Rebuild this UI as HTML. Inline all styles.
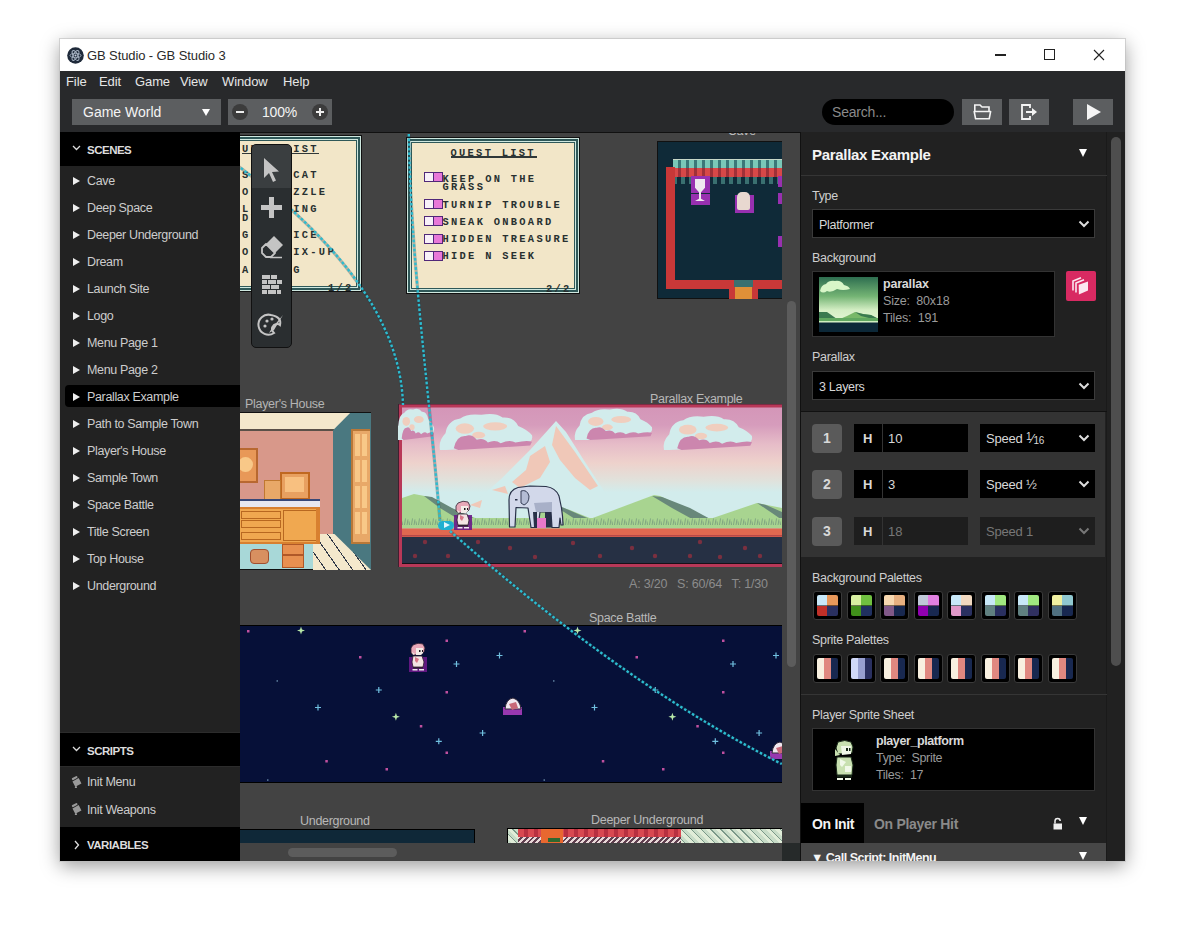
<!DOCTYPE html>
<html><head><meta charset="utf-8">
<style>
*{margin:0;padding:0;box-sizing:border-box}
html,body{width:1200px;height:941px;overflow:hidden;background:#fff;font-family:"Liberation Sans",sans-serif}
.a{position:absolute}
#win{position:absolute;left:60px;top:39px;width:1065px;height:822px;background:#28292b;box-shadow:0 0 0 1px rgba(190,190,190,0.6),0 5px 18px rgba(0,0,0,0.4);overflow:hidden}
#title{left:0;top:0;width:1065px;height:32px;background:#fff}
#menubar{left:0;top:32px;width:1065px;height:61px;background:#28292b}
.menu{position:absolute;margin-top:1px;color:#e6e6e6;font-size:13px;letter-spacing:-0.1px}
#side{left:0;top:93px;width:180px;height:729px;background:#222}
.hdr{position:absolute;left:0;width:180px;height:34px;background:#000;color:#ddd;font-weight:bold;font-size:11.5px}
.hdr span{position:absolute;left:27px;top:11.5px;letter-spacing:-0.5px}
.item{position:absolute;left:27px;margin-top:1px;color:#cdcdcd;font-size:12.5px;letter-spacing:-0.35px;white-space:nowrap}
.tri{position:absolute;left:13px;width:0;height:0;border-left:7px solid #eee;border-top:4px solid transparent;border-bottom:4px solid transparent}
#canvas{left:180px;top:93px;width:560px;height:729px;background:#434343;overflow:hidden}
#right{left:740px;top:93px;width:325px;height:729px;background:#212121;overflow:hidden}
.lbl{position:absolute;left:12px;color:#cfcfcf;font-size:12.5px;letter-spacing:-0.3px;white-space:nowrap}
.sel{position:absolute;left:12px;width:283px;height:29px;background:#000;border:1px solid #3a3a3a;color:#d8d8d8;font-size:12.5px;letter-spacing:-0.3px}
.slbl{position:absolute;color:#aaa;font-size:12.5px;letter-spacing:-0.3px;white-space:nowrap}
</style></head><body>
<div id="win">
  <div id="title" class="a">
    <svg class="a" style="left:7px;top:7.5px" width="17" height="17" viewBox="0 0 17 17"><circle cx="8.5" cy="8.5" r="8.3" fill="#1f2a3a"/><g fill="none" stroke="#a8b4c4" stroke-width="0.9"><ellipse cx="8.5" cy="8.5" rx="5.5" ry="2.2" transform="rotate(60 8.5 8.5)"/><ellipse cx="8.5" cy="8.5" rx="5.5" ry="2.2" transform="rotate(-60 8.5 8.5)"/><ellipse cx="8.5" cy="8.5" rx="5.5" ry="2.2"/></g><circle cx="8.5" cy="8.5" r="1" fill="#c8d0e0"/></svg>
    <div class="a" style="left:27px;top:9px;font-size:13px;color:#2a2a2a;letter-spacing:-0.1px">GB Studio - GB Studio 3</div>
    <div class="a" style="left:935px;top:15px;width:11px;height:1.5px;background:#222"></div>
    <div class="a" style="left:984px;top:10px;width:11px;height:11px;border:1px solid #222"></div>
    <svg class="a" style="left:1033px;top:10px" width="12" height="12" viewBox="0 0 12 12"><path d="M1 1 L11 11 M11 1 L1 11" stroke="#222" stroke-width="1.1"/></svg>
  </div>
  <div id="menubar" class="a">
    <span class="menu" style="left:6px;top:2px">File</span>
    <span class="menu" style="left:39px;top:2px">Edit</span>
    <span class="menu" style="left:75px;top:2px">Game</span>
    <span class="menu" style="left:120px;top:2px">View</span>
    <span class="menu" style="left:162px;top:2px">Window</span>
    <span class="menu" style="left:223px;top:2px">Help</span>
<div id="tb" style="position:absolute;left:0;top:-32px"><div class="a" style="left:11.5px;top:60px;width:149.5px;height:26px;background:#5c5e60"></div>
<div class="a" style="left:23px;top:64px;font-size:14px;color:#f4f4f4;line-height:18px;white-space:nowrap">Game World</div>
<div class="a" style="left:142px;top:70px;width:0;height:0;border-top:7px solid #fff;border-left:4px solid transparent;border-right:4px solid transparent"></div>
<div class="a" style="left:168px;top:60px;width:104px;height:26px;background:#5c5e60"></div>
<div class="a" style="left:172px;top:65px;width:16px;height:16px;border-radius:50%;background:#3c3c3c"></div><div class="a" style="left:176px;top:72px;width:8px;height:2px;background:#eee"></div>
<div class="a" style="left:251.5px;top:65px;width:16px;height:16px;border-radius:50%;background:#3c3c3c"></div><div class="a" style="left:255.5px;top:72px;width:8px;height:2px;background:#eee"></div><div class="a" style="left:258.5px;top:69px;width:2px;height:8px;background:#eee"></div>
<div class="a" style="left:202px;top:64px;font-size:14px;color:#f4f4f4;line-height:18px;letter-spacing:-0.2px">100%</div>
<div class="a" style="left:762px;top:60px;width:132px;height:26px;background:#000;border-radius:13px"></div>
<div class="a" style="left:772px;top:64px;font-size:14px;color:#8a8a8a;line-height:18px;letter-spacing:-0.2px">Search...</div>
<div class="a" style="left:902px;top:60px;width:40px;height:26px;background:#5c5e60"></div>
<div class="a" style="left:949px;top:60px;width:40px;height:26px;background:#5c5e60"></div>
<div class="a" style="left:1013px;top:60px;width:40px;height:26px;background:#5c5e60"></div>
<svg class="a" style="left:913px;top:64px" width="19" height="18" viewBox="0 0 19 18"><path d="M1.8 8 V2 H7 L9 4 H16 V8" fill="none" stroke="#f4f4f4" stroke-width="1.6"/><path d="M1.2 8.5 H17.6 L16.2 15.8 H2.6 Z" fill="none" stroke="#f4f4f4" stroke-width="1.6" stroke-linejoin="round"/></svg>
<svg class="a" style="left:960px;top:64px" width="19" height="18" viewBox="0 0 19 18"><path d="M10 5 V2 H2 V16 H10 V13" fill="none" stroke="#f4f4f4" stroke-width="1.8"/><path d="M6 9 H13" stroke="#f4f4f4" stroke-width="2"/><path d="M12 5 L17 9 L12 13Z" fill="#f4f4f4"/></svg>
<div class="a" style="left:1027px;top:65px;width:0;height:0;border-left:14px solid #f4f4f4;border-top:8px solid transparent;border-bottom:8px solid transparent"></div></div><!--tbend-->
  </div>
  <div id="side" class="a">
<div class="hdr" style="top:0"><svg class="a" style="left:12px;top:13px" width="9" height="6" viewBox="0 0 9 6"><path d="M1 1 L4.5 4.5 L8 1" stroke="#ddd" stroke-width="1.3" fill="none"/></svg><span>SCENES</span></div>
<div class="a" style="left:5px;top:253px;width:175px;height:22px;background:#000;border-radius:4px 0 0 4px"></div>
<div class="tri" style="top:45px"></div><div class="item" style="top:41px">Cave</div>
<div class="tri" style="top:72px"></div><div class="item" style="top:68px">Deep Space</div>
<div class="tri" style="top:99px"></div><div class="item" style="top:95px">Deeper Underground</div>
<div class="tri" style="top:126px"></div><div class="item" style="top:122px">Dream</div>
<div class="tri" style="top:153px"></div><div class="item" style="top:149px">Launch Site</div>
<div class="tri" style="top:180px"></div><div class="item" style="top:176px">Logo</div>
<div class="tri" style="top:207px"></div><div class="item" style="top:203px">Menu Page 1</div>
<div class="tri" style="top:234px"></div><div class="item" style="top:230px">Menu Page 2</div>
<div class="tri" style="top:261px"></div><div class="item" style="top:257px">Parallax Example</div>
<div class="tri" style="top:288px"></div><div class="item" style="top:284px">Path to Sample Town</div>
<div class="tri" style="top:315px"></div><div class="item" style="top:311px">Player&#39;s House</div>
<div class="tri" style="top:342px"></div><div class="item" style="top:338px">Sample Town</div>
<div class="tri" style="top:369px"></div><div class="item" style="top:365px">Space Battle</div>
<div class="tri" style="top:396px"></div><div class="item" style="top:392px">Title Screen</div>
<div class="tri" style="top:423px"></div><div class="item" style="top:419px">Top House</div>
<div class="tri" style="top:450px"></div><div class="item" style="top:446px">Underground</div>
<div class="a" style="left:0;top:600px;width:180px;height:1px;background:#2c2c2c"></div>
<div class="hdr" style="top:601px;height:33px"><svg class="a" style="left:12px;top:13px" width="9" height="6" viewBox="0 0 9 6"><path d="M1 1 L4.5 4.5 L8 1" stroke="#ddd" stroke-width="1.3" fill="none"/></svg><span>SCRIPTS</span></div>
<div class="a" style="left:0;top:634px;width:180px;height:1px;background:#2c2c2c"></div>
<svg class="a" style="left:11px;top:643px" width="11" height="13" viewBox="0 0 11 13"><g transform="rotate(-28 5.5 6.5)"><rect x="2.5" y="1.5" width="6" height="2.2" rx="1" fill="#9a9a9a"/><rect x="2" y="4.5" width="7" height="6" fill="#9a9a9a"/><circle cx="2.3" cy="11.3" r="1.1" fill="#9a9a9a"/></g></svg>
<div class="item" style="top:642px">Init Menu</div>
<svg class="a" style="left:11px;top:670px" width="11" height="13" viewBox="0 0 11 13"><g transform="rotate(-28 5.5 6.5)"><rect x="2.5" y="1.5" width="6" height="2.2" rx="1" fill="#9a9a9a"/><rect x="2" y="4.5" width="7" height="6" fill="#9a9a9a"/><circle cx="2.3" cy="11.3" r="1.1" fill="#9a9a9a"/></g></svg>
<div class="item" style="top:669.5px">Init Weapons</div>
<div class="hdr" style="top:695px"><svg class="a" style="left:14px;top:13px" width="6" height="10" viewBox="0 0 6 10"><path d="M1 1 L4.5 5 L1 9" stroke="#ddd" stroke-width="1.3" fill="none"/></svg><span>VARIABLES</span></div>

  </div>
  <div id="canvas" class="a">
<div class="a" style="left:-52px;top:3px;width:174px;height:157px;background:#f2e6c8;border:1px solid #111;box-shadow:inset 0 0 0 1px #cfe8e0,inset 0 0 0 3px #2f5858,inset 0 0 0 4px #cfe8e0,inset 0 0 0 5px #2f5858"></div>
<div class="a" style="left:-6.5px;top:11.5px;font-family:'Liberation Mono',monospace;font-weight:bold;font-size:10.4px;letter-spacing:2.3px;color:#283030;white-space:pre;line-height:10px"> UEST LIST</div>
<div class="a" style="left:2px;top:20.5px;width:77px;height:1.5px;background:#303838"></div>
<div class="a" style="left:-6.5px;top:38px;font-family:'Liberation Mono',monospace;font-weight:bold;font-size:10.4px;letter-spacing:2.3px;color:#283030;white-space:pre;line-height:10px"> S     CAT</div>
<div class="a" style="left:-6.5px;top:55px;font-family:'Liberation Mono',monospace;font-weight:bold;font-size:10.4px;letter-spacing:2.3px;color:#283030;white-space:pre;line-height:10px"> O     ZZLE</div>
<div class="a" style="left:-6.5px;top:72px;font-family:'Liberation Mono',monospace;font-weight:bold;font-size:10.4px;letter-spacing:2.3px;color:#283030;white-space:pre;line-height:10px"> L     ING</div>
<div class="a" style="left:-6.5px;top:81px;font-family:'Liberation Mono',monospace;font-weight:bold;font-size:10.4px;letter-spacing:2.3px;color:#283030;white-space:pre;line-height:10px"> DI</div>
<div class="a" style="left:-6.5px;top:98px;font-family:'Liberation Mono',monospace;font-weight:bold;font-size:10.4px;letter-spacing:2.3px;color:#283030;white-space:pre;line-height:10px"> G     ICE</div>
<div class="a" style="left:-6.5px;top:115px;font-family:'Liberation Mono',monospace;font-weight:bold;font-size:10.4px;letter-spacing:2.3px;color:#283030;white-space:pre;line-height:10px"> O     IX-UP</div>
<div class="a" style="left:-6.5px;top:133px;font-family:'Liberation Mono',monospace;font-weight:bold;font-size:10.4px;letter-spacing:2.3px;color:#283030;white-space:pre;line-height:10px"> A     G</div>
<div class="a" style="left:88px;top:151px;font-family:'Liberation Mono',monospace;font-weight:bold;font-size:10.4px;letter-spacing:2.3px;color:#283030;white-space:pre;line-height:10px">1/2</div>
<div class="a" style="left:166px;top:5px;width:174px;height:157px;background:#f2e6c8;border:1px solid #111;box-shadow:inset 0 0 0 1px #cfe8e0,inset 0 0 0 3px #2f5858,inset 0 0 0 4px #cfe8e0,inset 0 0 0 5px #2f5858"></div>
<div class="a" style="left:210.5px;top:15.5px;font-family:'Liberation Mono',monospace;font-weight:bold;font-size:10.4px;letter-spacing:2.3px;color:#283030;white-space:pre;line-height:10px">QUEST LIST</div>
<div class="a" style="left:211px;top:24px;width:86px;height:1.5px;background:#303838"></div>
<div class="a" style="left:202.5px;top:41.5px;font-family:'Liberation Mono',monospace;font-weight:bold;font-size:10.4px;letter-spacing:2.3px;color:#283030;white-space:pre;line-height:10px">KEEP ON THE</div>
<div class="a" style="left:202.5px;top:50px;font-family:'Liberation Mono',monospace;font-weight:bold;font-size:10.4px;letter-spacing:2.3px;color:#283030;white-space:pre;line-height:10px">GRASS</div>
<div class="a" style="left:202.5px;top:67.5px;font-family:'Liberation Mono',monospace;font-weight:bold;font-size:10.4px;letter-spacing:2.3px;color:#283030;white-space:pre;line-height:10px">TURNIP TROUBLE</div>
<div class="a" style="left:202.5px;top:84.5px;font-family:'Liberation Mono',monospace;font-weight:bold;font-size:10.4px;letter-spacing:2.3px;color:#283030;white-space:pre;line-height:10px">SNEAK ONBOARD</div>
<div class="a" style="left:202.5px;top:102px;font-family:'Liberation Mono',monospace;font-weight:bold;font-size:10.4px;letter-spacing:2.3px;color:#283030;white-space:pre;line-height:10px">HIDDEN TREASURE</div>
<div class="a" style="left:202.5px;top:119px;font-family:'Liberation Mono',monospace;font-weight:bold;font-size:10.4px;letter-spacing:2.3px;color:#283030;white-space:pre;line-height:10px">HIDE N SEEK</div>
<div class="a" style="left:183.5px;top:40px;width:19px;height:10px;background:#e878d8;border:1.5px solid #502878"></div><div class="a" style="left:183.5px;top:40px;width:10px;height:10px;background:#f8f0f8;border:1.5px solid #502878"></div>
<div class="a" style="left:183.5px;top:67px;width:19px;height:10px;background:#e878d8;border:1.5px solid #502878"></div><div class="a" style="left:183.5px;top:67px;width:10px;height:10px;background:#f8f0f8;border:1.5px solid #502878"></div>
<div class="a" style="left:183.5px;top:84px;width:19px;height:10px;background:#e878d8;border:1.5px solid #502878"></div><div class="a" style="left:183.5px;top:84px;width:10px;height:10px;background:#f8f0f8;border:1.5px solid #502878"></div>
<div class="a" style="left:183.5px;top:101.5px;width:19px;height:10px;background:#e878d8;border:1.5px solid #502878"></div><div class="a" style="left:183.5px;top:101.5px;width:10px;height:10px;background:#f8f0f8;border:1.5px solid #502878"></div>
<div class="a" style="left:183.5px;top:118.5px;width:19px;height:10px;background:#e878d8;border:1.5px solid #502878"></div><div class="a" style="left:183.5px;top:118.5px;width:10px;height:10px;background:#f8f0f8;border:1.5px solid #502878"></div>
<div class="a" style="left:306px;top:152px;font-family:'Liberation Mono',monospace;font-weight:bold;font-size:10.4px;letter-spacing:2.3px;color:#283030;white-space:pre;line-height:10px">2/2</div>
<div class="a" style="left:417px;top:9px;width:130px;height:158px;background:#0f2a38;border:1px solid #111"></div>
<div class="a" style="left:433px;top:27px;width:115px;height:10px;background:repeating-linear-gradient(90deg,#7ac8b8 0 5px,#3a7878 5px 8px);border-top:1px solid #c8d8c8"></div>
<div class="a" style="left:433px;top:36px;width:115px;height:9px;background:repeating-linear-gradient(90deg,#d84848 0 5px,#a03038 5px 8px)"></div>
<div class="a" style="left:433px;top:45px;width:115px;height:7px;background:repeating-linear-gradient(90deg,#3a7070 0 4px,#0f2a38 4px 8px)"></div>
<div class="a" style="left:426px;top:35px;width:9px;height:122px;background:#c83838"></div>
<div class="a" style="left:426px;top:148px;width:69px;height:9px;background:#c83838"></div>
<div class="a" style="left:512px;top:148px;width:36px;height:9px;background:#c83838"></div>
<div class="a" style="left:489px;top:148px;width:6px;height:19px;background:#c83838"></div><div class="a" style="left:512px;top:148px;width:6px;height:19px;background:#c83838"></div>
<div class="a" style="left:495px;top:155px;width:17px;height:12px;background:#e09038"></div>
<div class="a" style="left:494px;top:148px;width:19px;height:7px;background:#3a7070"></div>
<div class="a" style="left:451px;top:44px;width:19px;height:17px;background:#9830b0"></div><div class="a" style="left:451px;top:62px;width:19px;height:11px;background:#9830b0"></div>
<div class="a" style="left:455px;top:47px;width:10px;height:22px;background:#f0e8f0;clip-path:polygon(0 0,100% 0,100% 40%,60% 60%,60% 90%,100% 100%,0 100%,40% 90%,40% 60%,0 40%)"></div>
<div class="a" style="left:494.5px;top:63px;width:19px;height:18px;background:#9830b0"></div><div class="a" style="left:497px;top:60px;width:13px;height:18px;background:#e8d8d0;border-radius:5px 5px 2px 2px"></div>
<div class="a" style="left:538px;top:44px;width:4px;height:11px;background:#9830b0"></div><div class="a" style="left:538px;top:61px;width:4px;height:11px;background:#9830b0"></div><div class="a" style="left:538px;top:103.5px;width:4px;height:11px;background:#9830b0"></div>
<div class="a" style="left:488px;top:-8px;font-size:12px;color:#bbb">Cave</div>
<div class="a" style="left:-20px;top:280px;width:151px;height:158px;background:#111;overflow:hidden"><div class="a" style="left:0;top:1px;width:150px;height:156px;background:#a8d8d8"></div><div class="a" style="left:0;top:1px;width:150px;height:17px;background:#f4e8cc"></div><div class="a" style="left:0;top:17px;width:114px;height:2px;background:#5a5048"></div><div class="a" style="left:0;top:19px;width:114px;height:104px;background:#d8988a"></div><div class="a" style="left:113px;top:1px;width:38px;height:157px;background:#4a7880;clip-path:polygon(0 11%,45% 0,100% 0,100% 100%,45% 100%,0 77%)"></div><div class="a" style="left:131px;top:17px;width:19px;height:115px;background:#e8a868;border:2px solid #b87838;border-right:none"></div><div class="a" style="left:135px;top:22px;width:5px;height:22px;background:#f8c888"></div><div class="a" style="left:142px;top:22px;width:5px;height:22px;background:#f8c888"></div><div class="a" style="left:135px;top:48px;width:5px;height:22px;background:#f8c888"></div><div class="a" style="left:142px;top:48px;width:5px;height:22px;background:#f8c888"></div><div class="a" style="left:135px;top:74px;width:5px;height:22px;background:#f8c888"></div><div class="a" style="left:142px;top:74px;width:5px;height:22px;background:#f8c888"></div><div class="a" style="left:135px;top:100px;width:5px;height:22px;background:#f8c888"></div><div class="a" style="left:142px;top:100px;width:5px;height:22px;background:#f8c888"></div><div class="a" style="left:93px;top:122px;width:58px;height:36px;background:repeating-linear-gradient(55deg,#f4e8cc 0 10px,#303848 10px 11px);clip-path:polygon(0 0,37% 0,100% 100%,0 100%)"></div><div class="a" style="left:14px;top:36px;width:24px;height:35px;background:#e89858;border:2px solid #b86830"></div><div class="a" style="left:18px;top:45px;width:15px;height:15px;border-radius:50%;background:#f8c888"></div><div class="a" style="left:60px;top:60px;width:30px;height:28px;background:#e8a060;border:2px solid #c06820"></div><div class="a" style="left:65px;top:65px;width:19px;height:15px;background:#f8c080"></div><div class="a" style="left:44px;top:68px;width:17px;height:20px;background:#e8a868;border:1px solid #c07830"></div><div class="a" style="left:0;top:87px;width:100px;height:8px;background:#e8e8f0;border-top:2px solid #384878"></div><div class="a" style="left:0;top:95px;width:100px;height:37px;background:#f0a850;border:2px solid #d88030;border-left:none"></div><div class="a" style="left:21px;top:99px;width:40px;height:8px;border:1.5px solid #b86820"></div><div class="a" style="left:21px;top:108px;width:40px;height:8px;border:1.5px solid #b86820"></div><div class="a" style="left:21px;top:120px;width:40px;height:8px;border:1.5px solid #b86820"></div><div class="a" style="left:63px;top:98px;width:34px;height:31px;border:1.5px solid #b86820"></div><div class="a" style="left:96px;top:97px;width:4px;height:35px;background:#d88030"></div><div class="a" style="left:30px;top:137px;width:19px;height:15px;background:#d89060;border:1.5px solid #a05030;border-radius:4px"></div><div class="a" style="left:62px;top:132px;width:22px;height:24px;background:#e89050;border:1.5px solid #b05828"></div><div class="a" style="left:62px;top:142px;width:22px;height:2px;background:#b05828"></div></div>
<div class="a" style="left:5px;top:264.5px;font-size:12.5px;letter-spacing:-0.3px;color:#b4b4b4;white-space:nowrap">Player&#39;s House</div>
<svg class="a" style="left:158px;top:272px" width="384" height="163" viewBox="398 404 384 163"><defs><linearGradient id="sk" x1="0" y1="407" x2="0" y2="519" gradientUnits="userSpaceOnUse"><stop offset="0" stop-color="#d496b8"/><stop offset="0.16" stop-color="#d69cbc"/><stop offset="0.33" stop-color="#e6bcc8"/><stop offset="0.5" stop-color="#eed2cc"/><stop offset="0.66" stop-color="#e0e2dc"/><stop offset="0.76" stop-color="#d2ecec"/><stop offset="1" stop-color="#d2ecec"/></linearGradient><pattern id="gr" width="7" height="10.5" patternUnits="userSpaceOnUse"><rect width="7" height="10.5" fill="#a8d490"/><path d="M1 10.5 L2 5 M3.5 10.5 L3 7 M5.5 10.5 L6.5 4" stroke="#7aa07e" stroke-width="0.9"/></pattern></defs><rect x="398" y="403.5" width="390" height="163.5" fill="#b83858"/><rect x="398" y="403.5" width="390" height="1" fill="#402030"/><rect x="398" y="403.5" width="1" height="163.5" fill="#402030"/><rect x="402" y="407.5" width="380" height="156" fill="url(#sk)"/><path d="M455 519 L500 480 L530 450 L548 430 L556 421 L566 432 L585 462 L606 494 L630 519Z" fill="#d2ecec"/><path d="M556 426 L575 452 L598 486 L590 490 L575 478 L560 460 L552 445Z" fill="#f0c8b8"/><path d="M530 456 L545 446 L550 462 L540 478 L520 488 L512 482 L526 470Z" fill="#f0c8b8"/><path d="M492 490 L505 486 L508 494Z M470 505 L482 500 L480 508Z" fill="#f0c8b8"/><g transform="translate(396 408) scale(38 32)"><path d="M0 1 Q-0.02 0.75 0.06 0.55 Q0.08 0.2 0.22 0.15 Q0.3 0 0.45 0.05 Q0.6 -0.02 0.68 0.12 Q0.8 0.1 0.85 0.35 Q0.95 0.45 1 0.6 Q1.02 0.8 0.9 0.85 L0.4 0.92 Q0.2 1.02 0 1Z" fill="#d2ecec"/><ellipse cx="0.27" cy="0.42" rx="0.1" ry="0.14" fill="#f0cebe"/><ellipse cx="0.6" cy="0.36" rx="0.13" ry="0.11" fill="#f0cebe"/><ellipse cx="0.42" cy="0.6" rx="0.07" ry="0.09" fill="#f0cebe"/><path d="M0.15 0.95 Q0.18 0.6 0.28 0.62 Q0.34 0.55 0.4 0.72 Q0.48 0.66 0.52 0.8 Q0.6 0.7 0.66 0.82 Q0.76 0.7 0.82 0.8 Q0.95 0.72 1 0.78 L0.98 0.88 L0.2 1Z" fill="#cc86ae"/></g><g transform="translate(440 413) scale(92 37)"><path d="M0 1 Q-0.02 0.75 0.06 0.55 Q0.08 0.2 0.22 0.15 Q0.3 0 0.45 0.05 Q0.6 -0.02 0.68 0.12 Q0.8 0.1 0.85 0.35 Q0.95 0.45 1 0.6 Q1.02 0.8 0.9 0.85 L0.4 0.92 Q0.2 1.02 0 1Z" fill="#d2ecec"/><ellipse cx="0.27" cy="0.42" rx="0.1" ry="0.14" fill="#f0cebe"/><ellipse cx="0.6" cy="0.36" rx="0.13" ry="0.11" fill="#f0cebe"/><ellipse cx="0.42" cy="0.6" rx="0.07" ry="0.09" fill="#f0cebe"/><path d="M0.15 0.95 Q0.18 0.6 0.28 0.62 Q0.34 0.55 0.4 0.72 Q0.48 0.66 0.52 0.8 Q0.6 0.7 0.66 0.82 Q0.76 0.7 0.82 0.8 Q0.95 0.72 1 0.78 L0.98 0.88 L0.2 1Z" fill="#cc86ae"/></g><g transform="translate(575 408) scale(77 32)"><path d="M0 1 Q-0.02 0.75 0.06 0.55 Q0.08 0.2 0.22 0.15 Q0.3 0 0.45 0.05 Q0.6 -0.02 0.68 0.12 Q0.8 0.1 0.85 0.35 Q0.95 0.45 1 0.6 Q1.02 0.8 0.9 0.85 L0.4 0.92 Q0.2 1.02 0 1Z" fill="#d2ecec"/><ellipse cx="0.27" cy="0.42" rx="0.1" ry="0.14" fill="#f0cebe"/><ellipse cx="0.6" cy="0.36" rx="0.13" ry="0.11" fill="#f0cebe"/><ellipse cx="0.42" cy="0.6" rx="0.07" ry="0.09" fill="#f0cebe"/><path d="M0.15 0.95 Q0.18 0.6 0.28 0.62 Q0.34 0.55 0.4 0.72 Q0.48 0.66 0.52 0.8 Q0.6 0.7 0.66 0.82 Q0.76 0.7 0.82 0.8 Q0.95 0.72 1 0.78 L0.98 0.88 L0.2 1Z" fill="#cc86ae"/></g><g transform="translate(664 415) scale(88 35)"><path d="M0 1 Q-0.02 0.75 0.06 0.55 Q0.08 0.2 0.22 0.15 Q0.3 0 0.45 0.05 Q0.6 -0.02 0.68 0.12 Q0.8 0.1 0.85 0.35 Q0.95 0.45 1 0.6 Q1.02 0.8 0.9 0.85 L0.4 0.92 Q0.2 1.02 0 1Z" fill="#d2ecec"/><ellipse cx="0.27" cy="0.42" rx="0.1" ry="0.14" fill="#f0cebe"/><ellipse cx="0.6" cy="0.36" rx="0.13" ry="0.11" fill="#f0cebe"/><ellipse cx="0.42" cy="0.6" rx="0.07" ry="0.09" fill="#f0cebe"/><path d="M0.15 0.95 Q0.18 0.6 0.28 0.62 Q0.34 0.55 0.4 0.72 Q0.48 0.66 0.52 0.8 Q0.6 0.7 0.66 0.82 Q0.76 0.7 0.82 0.8 Q0.95 0.72 1 0.78 L0.98 0.88 L0.2 1Z" fill="#cc86ae"/></g><path d="M402 498 L414 494 L430 497 L455 510 L478 519 L402 519Z" fill="#a8d490"/><path d="M424 496 L432 497 L452 508 L478 520 L458 519 L440 508Z" fill="#68887a"/><path d="M530 519 L553 505 L570 510 L592 519Z" fill="#a8d490"/><path d="M553 505 L562 507 L578 514 L592 520 L575 519Z" fill="#68887a"/><path d="M590 519 L654 495 L660 496 L710 519Z" fill="#a8d490"/><path d="M652 496 L662 497 L690 508 L712 520 L692 519 L672 508Z" fill="#68887a"/><path d="M710 519 L757 503 L782 508 L782 519Z" fill="#a8d490"/><path d="M757 503 L766 505 L782 512 L782 520 L772 513Z" fill="#68887a"/><rect x="402" y="518" width="380" height="10.5" fill="url(#gr)"/><rect x="402" y="528.4" width="380" height="8.6" fill="#e06850"/><rect x="402" y="535" width="380" height="1.5" fill="#b84848"/><rect x="402" y="537" width="380" height="26" fill="#263044"/><g fill="#7a3040"><circle cx="425" cy="542" r="2.2"/><circle cx="415" cy="556" r="2.2"/><circle cx="448" cy="556" r="2.2"/><circle cx="478" cy="542" r="2.2"/><circle cx="510" cy="548" r="2.2"/><circle cx="535" cy="557" r="2.2"/><circle cx="573" cy="543" r="2.2"/><circle cx="600" cy="556" r="2.2"/><circle cx="632" cy="548" r="2.2"/><circle cx="655" cy="556" r="2.2"/><circle cx="700" cy="542" r="2.2"/><circle cx="690" cy="556" r="2.2"/><circle cx="745" cy="548" r="2.2"/><circle cx="760" cy="556" r="2.2"/><circle cx="720" cy="557" r="2.2"/></g><rect x="402" y="563" width="380" height="1" fill="#181018"/></svg>
<svg class="a" style="left:266px;top:352px" width="60" height="46" viewBox="506 484 60 46"><path d="M545 510 L553 510 L553 527.5 L545 527.5Z" fill="#283048"/><path d="M509.5 527 L509 500 Q509 490 518 487.5 L530 486 L546 486.5 Q556 488 559 496 L561.5 508 L562.5 516 L563 525 L561 525 L560 518 L559 527.5 L552 527.5 L551 512 L540 512 L538 527.5 L531 527.5 L528 508 L516 507.5 L515 527Z" fill="#d2d8ea" stroke="#283048" stroke-width="1.2" stroke-linejoin="round"/><path d="M521 491 Q527 489 529 496 Q529 503 524 505 L521 503Z" fill="#b4bcd4" stroke="#283048" stroke-width="0.9"/><path d="M534 503 L552 502 L552 512 L536 512Z" fill="#a8b0c8"/><path d="M533 512 L537 512 L537 527 L534 527Z" fill="#283048"/><rect x="515" y="499" width="2.5" height="1.5" fill="#283048"/><rect x="537" y="518" width="9" height="10" fill="#e878c8"/></svg>
<svg class="a" style="left:214px;top:367.5px" width="18.0" height="30.0" viewBox="0 0 18 30"><rect x="0" y="15" width="18" height="15" fill="#6a1888" opacity="0.9"/><path d="M4 3 Q9 0 14 2 L16 6 L15 10 L13 12 L5 13 L2 11 L2 6Z" fill="#e8a8b8" stroke="#302030" stroke-width="0.8"/><path d="M7 6 L14 6 L14 11 L12 13 L7 13Z" fill="#f4ece8"/><rect x="10" y="8" width="1.5" height="2" fill="#201820"/><rect x="13" y="8" width="1" height="2" fill="#201820"/><path d="M3 10 L6 12 L4 13Z" fill="#f4ece8"/><path d="M4 14 L13 14 L15 20 L14 25 L4 25 L3 20Z" fill="#f4e4e4" stroke="#302030" stroke-width="0.8"/><path d="M6 15 L10 17 L8 21 L6 19Z" fill="#d87888"/><rect x="4" y="25" width="10" height="1.5" fill="#302030"/><rect x="3.5" y="27" width="5" height="1.5" fill="#f0e8f0"/><rect x="10" y="27" width="5" height="1.5" fill="#f0e8f0"/></svg>
<div class="a" style="left:198px;top:388.5px;width:16px;height:9.5px;background:#20b0d0;border-radius:5px"></div><div class="a" style="left:204px;top:390px;width:0;height:0;border-left:6px solid #e0f8ff;border-top:3px solid transparent;border-bottom:3px solid transparent"></div>
<div class="a" style="left:410px;top:259.5px;font-size:12.5px;letter-spacing:-0.3px;color:#b8b8b8;white-space:nowrap">Parallax Example</div>
<div class="a" style="left:389px;top:445px;font-size:12.5px;letter-spacing:-0.2px;color:#8c8c8c;white-space:pre">A: 3/20   S: 60/64   T: 1/30</div>
<div class="a" style="left:-5px;top:493px;width:548px;height:158px;background:#061038;border:1px solid #000"></div>
<svg class="a" style="left:0;top:493px" width="542" height="158" viewBox="0 493 542 158"><rect x="7" y="498" width="2.5" height="2.5" fill="#c050a0"/><path d="M61 494.5L62 497.5L65 498.5L62 499.5L61 502.5L60 499.5L57 498.5L60 497.5Z" fill="#b8e8a8"/><rect x="119" y="524" width="2.5" height="2.5" fill="#c050a0"/><rect x="205.5" y="507.5" width="2.5" height="2.5" fill="#c050a0"/><path d="M213.5 532H219.5M216.5 529V535" stroke="#70c0e0" stroke-width="1.2"/><path d="M256.5 523.5H262.5M259.5 520.5V526.5" stroke="#70c0e0" stroke-width="1.2"/><rect x="36.5" y="548.2" width="1.5" height="1.5" fill="#6080a0"/><path d="M135.8 558H141.8M138.8 555V561" stroke="#70c0e0" stroke-width="1.2"/><rect x="205.5" y="559" width="2.5" height="2.5" fill="#c050a0"/><path d="M75 575.5H81M78 572.5V578.5" stroke="#70c0e0" stroke-width="1.2"/><path d="M155.9 580.8L156.9 583.8L159.9 584.8L156.9 585.8L155.9 588.8L154.9 585.8L151.9 584.8L154.9 583.8Z" fill="#b8e8a8"/><rect x="179.8" y="593" width="2.5" height="2.5" fill="#c050a0"/><path d="M239.6 601H245.6M242.6 598V604" stroke="#70c0e0" stroke-width="1.2"/><path d="M195.8 609.3H201.8M198.8 606.3V612.3" stroke="#70c0e0" stroke-width="1.2"/><rect x="205.5" y="619.5" width="2.5" height="2.5" fill="#c050a0"/><rect x="85.3" y="628" width="2.5" height="2.5" fill="#c050a0"/><rect x="145.5" y="636" width="2.5" height="2.5" fill="#c050a0"/><rect x="27.0" y="647.3" width="1.5" height="1.5" fill="#6080a0"/><rect x="283.5" y="498" width="2.5" height="2.5" fill="#c050a0"/><path d="M337.5 494.5L338.5 497.5L341.5 498.5L338.5 499.5L337.5 502.5L336.5 499.5L333.5 498.5L336.5 497.5Z" fill="#b8e8a8"/><rect x="395.5" y="524" width="2.5" height="2.5" fill="#c050a0"/><rect x="482.0" y="507.5" width="2.5" height="2.5" fill="#c050a0"/><path d="M490.0 532H496.0M493.0 529V535" stroke="#70c0e0" stroke-width="1.2"/><path d="M533.0 523.5H539.0M536.0 520.5V526.5" stroke="#70c0e0" stroke-width="1.2"/><rect x="313.0" y="548.2" width="1.5" height="1.5" fill="#6080a0"/><path d="M412.3 558H418.3M415.3 555V561" stroke="#70c0e0" stroke-width="1.2"/><rect x="482.0" y="559" width="2.5" height="2.5" fill="#c050a0"/><path d="M351.5 575.5H357.5M354.5 572.5V578.5" stroke="#70c0e0" stroke-width="1.2"/><path d="M432.4 580.8L433.4 583.8L436.4 584.8L433.4 585.8L432.4 588.8L431.4 585.8L428.4 584.8L431.4 583.8Z" fill="#b8e8a8"/><rect x="456.3" y="593" width="2.5" height="2.5" fill="#c050a0"/><path d="M516.1 601H522.1M519.1 598V604" stroke="#70c0e0" stroke-width="1.2"/><path d="M472.3 609.3H478.3M475.3 606.3V612.3" stroke="#70c0e0" stroke-width="1.2"/><rect x="482.0" y="619.5" width="2.5" height="2.5" fill="#c050a0"/><rect x="361.8" y="628" width="2.5" height="2.5" fill="#c050a0"/><rect x="422.0" y="636" width="2.5" height="2.5" fill="#c050a0"/><rect x="303.5" y="647.3" width="1.5" height="1.5" fill="#6080a0"/></svg>
<svg class="a" style="left:168.5px;top:509.5px" width="18.0" height="30.0" viewBox="0 0 18 30"><rect x="0" y="15" width="18" height="15" fill="#6a1888" opacity="0.9"/><path d="M4 3 Q9 0 14 2 L16 6 L15 10 L13 12 L5 13 L2 11 L2 6Z" fill="#e8a8b8" stroke="#302030" stroke-width="0.8"/><path d="M7 6 L14 6 L14 11 L12 13 L7 13Z" fill="#f4ece8"/><rect x="10" y="8" width="1.5" height="2" fill="#201820"/><rect x="13" y="8" width="1" height="2" fill="#201820"/><path d="M3 10 L6 12 L4 13Z" fill="#f4ece8"/><path d="M4 14 L13 14 L15 20 L14 25 L4 25 L3 20Z" fill="#f4e4e4" stroke="#302030" stroke-width="0.8"/><path d="M6 15 L10 17 L8 21 L6 19Z" fill="#d87888"/><rect x="4" y="25" width="10" height="1.5" fill="#302030"/><rect x="3.5" y="27" width="5" height="1.5" fill="#f0e8f0"/><rect x="10" y="27" width="5" height="1.5" fill="#f0e8f0"/></svg>
<svg class="a" style="left:263px;top:564px" width="19" height="19" viewBox="0 0 19 19"><rect x="0" y="11" width="19" height="8" fill="#9838b0"/><path d="M2 13 Q3 3 10 2 Q17 4 18 13 Z" fill="#f0e8f0" stroke="#302838" stroke-width="1"/><path d="M6 8 L13 6 L15 12 L9 14Z" fill="#c86878"/></svg>
<svg class="a" style="left:530px;top:608px" width="19" height="19" viewBox="0 0 19 19"><rect x="0" y="11" width="19" height="8" fill="#9838b0"/><path d="M2 13 Q3 3 10 2 Q17 4 18 13 Z" fill="#f0e8f0" stroke="#302838" stroke-width="1"/><path d="M6 8 L13 6 L15 12 L9 14Z" fill="#c86878"/></svg>
<div class="a" style="left:349px;top:478.5px;font-size:12.5px;letter-spacing:-0.3px;color:#b8b8b8;white-space:nowrap">Space Battle</div>
<div class="a" style="left:-5px;top:697px;width:240px;height:30px;background:#0f2838;border:1px solid #000"></div>
<div class="a" style="left:60px;top:682px;font-size:12.5px;letter-spacing:-0.3px;color:#b8b8b8;white-space:nowrap">Underground</div>
<div class="a" style="left:267px;top:696px;width:276px;height:30px;background:#d8e8d8;border:1px solid #000;overflow:hidden"><div class="a" style="left:0;top:0;width:276px;height:30px;background:repeating-linear-gradient(45deg,#e0ecd8 0 3px,#7a9888 3px 4px,#c8dcc8 4px 7px)"></div><div class="a" style="left:10px;top:0;width:163px;height:30px;background:repeating-linear-gradient(90deg,#d84850 0 6px,#b83040 6px 10px)"></div><div class="a" style="left:10px;top:8px;width:163px;height:8px;background:repeating-linear-gradient(135deg,#e8d8d8 0 2px,#604050 2px 4px)"></div><div class="a" style="left:33px;top:0;width:22px;height:16px;background:#e86830"></div><div class="a" style="left:40px;top:9px;width:12px;height:4px;background:#306830"></div></div>
<div class="a" style="left:351px;top:681px;font-size:12.5px;letter-spacing:-0.3px;color:#b8b8b8;white-space:nowrap">Deeper Underground</div>
<svg class="a" style="left:0;top:0" width="542" height="711" viewBox="0 0 542 711"><path d="M -10 28 C 67.8 85, 160.5 170.1, 163 273" fill="none" stroke="#1a3848" stroke-opacity="0.3" stroke-width="3.2"/><path d="M -10 28 C 67.8 85, 160.5 170.1, 163 273" fill="none" stroke="#2cbcd0" stroke-width="2.4" stroke-dasharray="2.6 2"/><path d="M 168.8 2 C 170.8 131.4, 189.3 260.3, 200 389" fill="none" stroke="#1a3848" stroke-opacity="0.3" stroke-width="3.2"/><path d="M 168.8 2 C 170.8 131.4, 189.3 260.3, 200 389" fill="none" stroke="#2cbcd0" stroke-width="2.4" stroke-dasharray="2.6 2"/><path d="M 210 399 C 310.9 488.1, 421 571.3, 541.8 632" fill="none" stroke="#1a3848" stroke-opacity="0.3" stroke-width="3.2"/><path d="M 210 399 C 310.9 488.1, 421 571.3, 541.8 632" fill="none" stroke="#2cbcd0" stroke-width="2.4" stroke-dasharray="2.6 2"/></svg>
<div class="a" style="left:11px;top:12px;width:41px;height:204px;background:#2a2e30;border:1px solid #111;border-radius:5px;overflow:hidden"><div class="a" style="left:0;top:0;width:39px;height:43px;background:#3a3e40"></div><svg class="a" style="left:0;top:0" width="39" height="202" viewBox="0 0 39 202"><path d="M12 13 L12 33 L17 28 L21 37 L24 35.5 L20 27 L27 26.5Z" fill="#c4c4c4"/><path d="M17 52 H22 V60 H30 V65 H22 V73 H17 V65 H9 V60 H17Z" fill="#c4c4c4"/><path d="M22 91 L31 100 L23 108 L14 99Z" fill="#c4c4c4"/><path d="M14 99 L23 108 L19 112 L14 112 L10 108 L10 103Z" fill="none" stroke="#c4c4c4" stroke-width="1.8" stroke-linejoin="round"/><path d="M18 112.5 H30" stroke="#c4c4c4" stroke-width="1.6"/><g fill="#c4c4c4" transform="translate(0,3)"><rect x="10" y="127" width="8" height="4"/><rect x="19" y="127" width="6" height="4"/><rect x="10" y="132" width="5" height="4"/><rect x="16" y="132" width="8" height="4"/><rect x="25" y="132" width="5" height="4"/><rect x="10" y="137" width="8" height="4"/><rect x="19" y="137" width="8" height="4"/><rect x="10" y="142" width="5" height="4"/><rect x="16" y="142" width="8" height="4"/><rect x="25" y="142" width="4" height="4"/></g><g transform="translate(0,2)"><path d="M19 168 A10 10 0 1 0 22 186 Q18 182 22 178 Q26 176 28 178 Q30 170 19 168Z" fill="none" stroke="#c4c4c4" stroke-width="2"/><circle cx="15" cy="174" r="1.6" fill="#c4c4c4"/><circle cx="13" cy="179" r="1.6" fill="#c4c4c4"/><circle cx="20" cy="172" r="1.6" fill="#c4c4c4"/><path d="M31 168 L20 181 L17 186 L22 183 Z" fill="#c4c4c4"/></g></svg></div>
<div class="a" style="left:542px;top:0;width:18px;height:711px;background:#434343"></div>
<div class="a" style="left:546.5px;top:169px;width:9px;height:366px;background:#5c5c5c;border-radius:5px"></div>
<div class="a" style="left:0;top:711px;width:542px;height:18px;background:#434343"></div>
<div class="a" style="left:48px;top:716px;width:109px;height:9px;background:#5c5c5c;border-radius:5px"></div>
<div class="a" style="left:542px;top:711px;width:18px;height:18px;background:#262a2a"></div>
<div class="a" style="left:0;top:0;width:560px;height:1px;background:#111"></div>
  </div>
  <div id="right" class="a">
<div class="a" style="left:0;top:0;width:1px;height:729px;background:#111"></div>
<div class="a" style="left:306px;top:0;width:1px;height:729px;background:#1a1a1a"></div>
<div class="a" style="left:311px;top:5px;width:10px;height:529px;background:#4e4e4e;border-radius:5px"></div>
<div class="a" style="left:12px;top:14px;font-size:15px;font-weight:bold;color:#f4f4f4;letter-spacing:-0.3px;white-space:nowrap">Parallax Example</div>
<div class="a" style="left:278.5px;top:17px;width:0;height:0;border-top:8px solid #fff;border-left:4.5px solid transparent;border-right:4.5px solid transparent"></div>
<div class="a" style="left:1px;top:43px;width:306px;height:1px;background:#353535"></div>
<div class="lbl" style="top:56.5px">Type</div>
<div class="sel" style="top:77px;height:29px"><span class="a" style="left:6px;top:7.0px;line-height:16px">Platformer</span></div><svg class="a" style="left:278px;top:88px" width="12" height="8" viewBox="0 0 12 8"><path d="M1.5 1.5 L6 6 L10.5 1.5" stroke="#ddd" stroke-width="2" fill="none"/></svg>
<div class="lbl" style="top:118.5px">Background</div>
<div class="a" style="left:12px;top:139px;width:243px;height:66px;background:#000;border:1px solid #333"></div>
<svg class="a" style="left:19px;top:145px" width="59" height="55" viewBox="0 0 59 55"><defs><linearGradient id="tg" x1="0" y1="0" x2="0" y2="1"><stop offset="0" stop-color="#2e6e50"/><stop offset="0.35" stop-color="#74b474"/><stop offset="0.6" stop-color="#d4eec4"/><stop offset="0.8" stop-color="#e4f6d4"/></linearGradient></defs><rect width="59" height="55" fill="url(#tg)"/><path d="M1 14 Q2 8 7 7 Q10 3 16 4 Q22 3 25 8 Q30 9 31 12 Q24 14 18 12 Q12 16 8 14 Q4 17 1 14Z" fill="#d8f6c8"/><path d="M0 35 L8 35 L18 42 L0 44Z" fill="#3a7a50"/><path d="M16 44 L28 39 L36 35 L44 37 L52 38 L59 42 L59 44Z" fill="#78b868"/><path d="M36 35 L44 37 L52 38 L58 41 L50 41 L42 39Z" fill="#3a7a50"/><rect x="0" y="41" width="59" height="3" fill="#60a860"/><rect x="0" y="44" width="59" height="1.5" fill="#d0f0c0"/><rect x="0" y="45.5" width="59" height="9.5" fill="#0c2838"/></svg>
<div class="a" style="left:83px;top:145px;font-size:12.5px;font-weight:bold;color:#d8d8d8;letter-spacing:-0.2px">parallax</div>
<div class="a" style="left:83px;top:162px;font-size:12.5px;color:#9a9a9a;white-space:pre;letter-spacing:-0.2px">Size:  80x18</div>
<div class="a" style="left:83px;top:179px;font-size:12.5px;color:#9a9a9a;white-space:pre;letter-spacing:-0.2px">Tiles:  191</div>
<div class="a" style="left:265.5px;top:138.7px;width:30.5px;height:30.3px;background:#d82a62;border-radius:2px"></div>
<svg class="a" style="left:265px;top:139px" width="31" height="31" viewBox="0 0 31 31"><path d="M13.7 13.7 L23 10.6 L23 19.6 L13.9 23.6Z" fill="#fbe8f0"/><path d="M11 21.5 V12 L19 8.8" fill="none" stroke="#fbe8f0" stroke-width="1.6"/><path d="M8 19.5 V10 L16 6.8" fill="none" stroke="#fbe8f0" stroke-width="1.6"/></svg>
<div class="lbl" style="top:217.5px">Parallax</div>
<div class="sel" style="top:239px;height:29px"><span class="a" style="left:6px;top:7.0px;line-height:16px">3 Layers</span></div><svg class="a" style="left:278px;top:250px" width="12" height="8" viewBox="0 0 12 8"><path d="M1.5 1.5 L6 6 L10.5 1.5" stroke="#ddd" stroke-width="2" fill="none"/></svg>
<div class="a" style="left:1px;top:279px;width:306px;height:1px;background:#111"></div>
<div class="a" style="left:1px;top:280px;width:304px;height:145px;background:#333"></div>
<div class="a" style="left:12px;top:292px;width:30px;height:29px;background:#5a5a5a;border-radius:4px;color:#d8d8d8;font-weight:bold;font-size:14px;text-align:center;line-height:29px">1</div>
<div class="a" style="left:54px;top:292px;width:114px;height:28px;background:#000"></div>
<div class="a" style="left:82px;top:292px;width:1px;height:28px;background:#333"></div>
<div class="a" style="left:63px;top:299px;font-size:13px;font-weight:bold;color:#d8d8d8">H</div>
<div class="a" style="left:88px;top:299px;font-size:13px;color:#d8d8d8">10</div>
<div class="a" style="left:180px;top:292px;width:115px;height:28px;background:#000"></div>
<div class="a" style="left:186px;top:299px;font-size:13px;color:#d8d8d8;white-space:nowrap;letter-spacing:-0.2px">Speed <span style="font-size:10px;position:relative;top:-3px">1</span>&#x2044;<span style="font-size:10px;position:relative;top:1px">16</span></div>
<svg class="a" style="left:278px;top:302px" width="12" height="8" viewBox="0 0 12 8"><path d="M1.5 1.5 L6 6 L10.5 1.5" stroke="#ddd" stroke-width="2" fill="none"/></svg>
<div class="a" style="left:12px;top:338px;width:30px;height:29px;background:#5a5a5a;border-radius:4px;color:#d8d8d8;font-weight:bold;font-size:14px;text-align:center;line-height:29px">2</div>
<div class="a" style="left:54px;top:338px;width:114px;height:28px;background:#000"></div>
<div class="a" style="left:82px;top:338px;width:1px;height:28px;background:#333"></div>
<div class="a" style="left:63px;top:345px;font-size:13px;font-weight:bold;color:#d8d8d8">H</div>
<div class="a" style="left:88px;top:345px;font-size:13px;color:#d8d8d8">3</div>
<div class="a" style="left:180px;top:338px;width:115px;height:28px;background:#000"></div>
<div class="a" style="left:186px;top:345px;font-size:13px;color:#d8d8d8;white-space:nowrap;letter-spacing:-0.2px">Speed &#189;</div>
<svg class="a" style="left:278px;top:348px" width="12" height="8" viewBox="0 0 12 8"><path d="M1.5 1.5 L6 6 L10.5 1.5" stroke="#ddd" stroke-width="2" fill="none"/></svg>
<div class="a" style="left:12px;top:385px;width:30px;height:29px;background:#5a5a5a;border-radius:4px;color:#d8d8d8;font-weight:bold;font-size:14px;text-align:center;line-height:29px">3</div>
<div class="a" style="left:54px;top:385px;width:114px;height:28px;background:#1e1e1e"></div>
<div class="a" style="left:82px;top:385px;width:1px;height:28px;background:#333"></div>
<div class="a" style="left:63px;top:392px;font-size:13px;font-weight:bold;color:#d8d8d8">H</div>
<div class="a" style="left:88px;top:392px;font-size:13px;color:#777">18</div>
<div class="a" style="left:180px;top:385px;width:115px;height:28px;background:#1e1e1e"></div>
<div class="a" style="left:186px;top:392px;font-size:13px;color:#777;white-space:nowrap;letter-spacing:-0.2px">Speed 1</div>
<svg class="a" style="left:278px;top:395px" width="12" height="8" viewBox="0 0 12 8"><path d="M1.5 1.5 L6 6 L10.5 1.5" stroke="#777" stroke-width="2" fill="none"/></svg>
<div class="lbl" style="top:438.5px">Background Palettes</div>
<div class="a" style="left:13.0px;top:459px;width:29px;height:29px;background:#000;border:1px solid #3a3a3a;border-radius:3px;padding:3px"><div style="width:100%;height:100%;border-radius:2px;overflow:hidden;background:linear-gradient(90deg,#c8e8f8 50%,#e8985a 50%) top/100% 50% no-repeat,linear-gradient(90deg,#c03028 50%,#2a3060 50%) bottom/100% 50% no-repeat"></div></div>
<div class="a" style="left:46.5px;top:459px;width:29px;height:29px;background:#000;border:1px solid #3a3a3a;border-radius:3px;padding:3px"><div style="width:100%;height:100%;border-radius:2px;overflow:hidden;background:linear-gradient(90deg,#d8f0a0 50%,#70c040 50%) top/100% 50% no-repeat,linear-gradient(90deg,#40901a 50%,#203060 50%) bottom/100% 50% no-repeat"></div></div>
<div class="a" style="left:80.0px;top:459px;width:29px;height:29px;background:#000;border:1px solid #3a3a3a;border-radius:3px;padding:3px"><div style="width:100%;height:100%;border-radius:2px;overflow:hidden;background:linear-gradient(90deg,#f8d8b0 50%,#e8b080 50%) top/100% 50% no-repeat,linear-gradient(90deg,#805888 50%,#182850 50%) bottom/100% 50% no-repeat"></div></div>
<div class="a" style="left:113.5px;top:459px;width:29px;height:29px;background:#000;border:1px solid #3a3a3a;border-radius:3px;padding:3px"><div style="width:100%;height:100%;border-radius:2px;overflow:hidden;background:linear-gradient(90deg,#c0c8d8 50%,#e080e0 50%) top/100% 50% no-repeat,linear-gradient(90deg,#9000b0 50%,#182850 50%) bottom/100% 50% no-repeat"></div></div>
<div class="a" style="left:147.0px;top:459px;width:29px;height:29px;background:#000;border:1px solid #3a3a3a;border-radius:3px;padding:3px"><div style="width:100%;height:100%;border-radius:2px;overflow:hidden;background:linear-gradient(90deg,#c8e8f8 50%,#f0d8c0 50%) top/100% 50% no-repeat,linear-gradient(90deg,#e098c8 50%,#2a3060 50%) bottom/100% 50% no-repeat"></div></div>
<div class="a" style="left:180.5px;top:459px;width:29px;height:29px;background:#000;border:1px solid #3a3a3a;border-radius:3px;padding:3px"><div style="width:100%;height:100%;border-radius:2px;overflow:hidden;background:linear-gradient(90deg,#c8e8f8 50%,#a0e880 50%) top/100% 50% no-repeat,linear-gradient(90deg,#608080 50%,#2a3060 50%) bottom/100% 50% no-repeat"></div></div>
<div class="a" style="left:214.0px;top:459px;width:29px;height:29px;background:#000;border:1px solid #3a3a3a;border-radius:3px;padding:3px"><div style="width:100%;height:100%;border-radius:2px;overflow:hidden;background:linear-gradient(90deg,#c8e8f8 50%,#a0e880 50%) top/100% 50% no-repeat,linear-gradient(90deg,#608080 50%,#303060 50%) bottom/100% 50% no-repeat"></div></div>
<div class="a" style="left:247.5px;top:459px;width:29px;height:29px;background:#000;border:1px solid #3a3a3a;border-radius:3px;padding:3px"><div style="width:100%;height:100%;border-radius:2px;overflow:hidden;background:linear-gradient(90deg,#f0f0a0 50%,#90c8d0 50%) top/100% 50% no-repeat,linear-gradient(90deg,#507080 50%,#182850 50%) bottom/100% 50% no-repeat"></div></div>
<div class="lbl" style="top:500.5px">Sprite Palettes</div>
<div class="a" style="left:13.0px;top:522px;width:29px;height:29px;background:#000;border:1px solid #3a3a3a;border-radius:3px;padding:3px"><div style="width:100%;height:100%;border-radius:2px;background:linear-gradient(90deg,#f8f0e0 0 34%,#e08880 34% 66%,#182850 66%)"></div></div>
<div class="a" style="left:46.5px;top:522px;width:29px;height:29px;background:#000;border:1px solid #3a3a3a;border-radius:3px;padding:3px"><div style="width:100%;height:100%;border-radius:2px;background:linear-gradient(90deg,#d0d8f8 0 34%,#98a0d0 34% 66%,#2a3060 66%)"></div></div>
<div class="a" style="left:80.0px;top:522px;width:29px;height:29px;background:#000;border:1px solid #3a3a3a;border-radius:3px;padding:3px"><div style="width:100%;height:100%;border-radius:2px;background:linear-gradient(90deg,#f8f0e0 0 34%,#e08880 34% 66%,#182850 66%)"></div></div>
<div class="a" style="left:113.5px;top:522px;width:29px;height:29px;background:#000;border:1px solid #3a3a3a;border-radius:3px;padding:3px"><div style="width:100%;height:100%;border-radius:2px;background:linear-gradient(90deg,#f8f0e0 0 34%,#e08880 34% 66%,#182850 66%)"></div></div>
<div class="a" style="left:147.0px;top:522px;width:29px;height:29px;background:#000;border:1px solid #3a3a3a;border-radius:3px;padding:3px"><div style="width:100%;height:100%;border-radius:2px;background:linear-gradient(90deg,#f8f0e0 0 34%,#e08880 34% 66%,#182850 66%)"></div></div>
<div class="a" style="left:180.5px;top:522px;width:29px;height:29px;background:#000;border:1px solid #3a3a3a;border-radius:3px;padding:3px"><div style="width:100%;height:100%;border-radius:2px;background:linear-gradient(90deg,#f8f0e0 0 34%,#e08880 34% 66%,#182850 66%)"></div></div>
<div class="a" style="left:214.0px;top:522px;width:29px;height:29px;background:#000;border:1px solid #3a3a3a;border-radius:3px;padding:3px"><div style="width:100%;height:100%;border-radius:2px;background:linear-gradient(90deg,#f8f0e0 0 34%,#e08880 34% 66%,#182850 66%)"></div></div>
<div class="a" style="left:247.5px;top:522px;width:29px;height:29px;background:#000;border:1px solid #3a3a3a;border-radius:3px;padding:3px"><div style="width:100%;height:100%;border-radius:2px;background:linear-gradient(90deg,#f8f0e0 0 34%,#e08880 34% 66%,#182850 66%)"></div></div>
<div class="a" style="left:1px;top:562px;width:306px;height:1px;background:#353535"></div>
<div class="lbl" style="top:575.5px">Player Sprite Sheet</div>
<div class="a" style="left:12px;top:596px;width:283px;height:63px;background:#000;border:1px solid #333"></div>
<svg class="a" style="left:32px;top:607px" width="26" height="46" viewBox="0 0 26 46"><path d="M6 3 Q13 0 19 3 L21 8 L20 14 L6 15 L4 9Z" fill="#c8e0b0" stroke="#182818" stroke-width="1"/><path d="M9 7 L19 7 L19 15 L10 16Z" fill="#f0f8e8"/><rect x="14" y="9" width="2" height="3" fill="#182818"/><rect x="17" y="9" width="1.5" height="3" fill="#182818"/><path d="M3 10 L8 16 L3 17Z" fill="#c8e0b0"/><path d="M5 18 L19 18 L21 26 L20 36 L5 36 L4 26Z" fill="#c8e0b0" stroke="#182818" stroke-width="1"/><path d="M8 20 L14 23 L10 28 L8 26Z" fill="#f0f8e8"/><path d="M13 27 L19 27 L19 33 L13 33Z" fill="#f0f8e8"/><rect x="5" y="36" width="15" height="2.5" fill="#182818"/><rect x="5" y="39" width="6" height="2" fill="#f0f8e8"/><rect x="13" y="39" width="6" height="2" fill="#f0f8e8"/></svg>
<div class="a" style="left:76px;top:602px;font-size:12.5px;font-weight:bold;color:#d8d8d8;letter-spacing:-0.4px">player_platform</div>
<div class="a" style="left:76px;top:619px;font-size:12.5px;color:#9a9a9a;white-space:pre;letter-spacing:-0.3px">Type:  Sprite</div>
<div class="a" style="left:76px;top:636px;font-size:12.5px;color:#9a9a9a;white-space:pre;letter-spacing:-0.3px">Tiles:  17</div>
<div class="a" style="left:1px;top:671px;width:63px;height:40px;background:#000"></div>
<div class="a" style="left:12px;top:684px;font-size:14px;font-weight:bold;color:#f4f4f4;letter-spacing:-0.3px">On Init</div>
<div class="a" style="left:74px;top:684px;font-size:14px;font-weight:bold;color:#8a8a8a;letter-spacing:-0.3px">On Player Hit</div>
<svg class="a" style="left:252px;top:685px" width="11" height="13" viewBox="0 0 11 13"><path d="M3 6.5 V4 A2.6 2.6 0 0 1 8.2 4" stroke="#eee" stroke-width="1.5" fill="none"/><rect x="1.5" y="6.5" width="8.5" height="6" fill="#eee"/></svg>
<div class="a" style="left:278.5px;top:685px;width:0;height:0;border-top:8px solid #fff;border-left:4.5px solid transparent;border-right:4.5px solid transparent"></div>
<div class="a" style="left:1px;top:711px;width:305px;height:18px;background:#474747"></div>
<div class="a" style="left:11px;top:719px;font-size:12.5px;font-weight:bold;color:#f4f4f4;white-space:nowrap;letter-spacing:-0.5px">&#9660; Call Script: InitMenu</div>
<div class="a" style="left:278.5px;top:719.5px;width:0;height:0;border-top:8px solid #fff;border-left:4.5px solid transparent;border-right:4.5px solid transparent"></div>
  </div>
  </div>
</body></html>
